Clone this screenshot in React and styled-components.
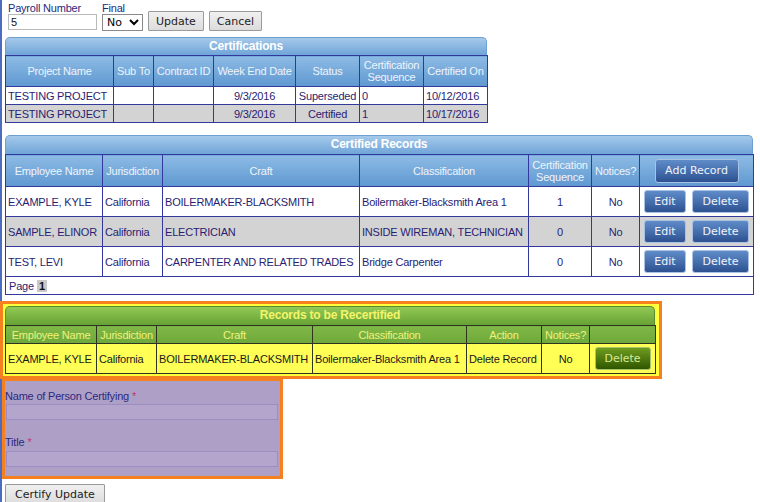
import React from 'react';
import styled, { createGlobalStyle, css } from 'styled-components';

const GlobalStyle = createGlobalStyle`
  body {
    margin: 0;
    background: #fff;
    font-family: "Liberation Sans", Arial, sans-serif;
  }
`;

const tones = {
  blue: {
    titleBg: 'linear-gradient(#a6c9ea, #6fa5d8)',
    titleBorder: '#6e9fd2',
    titleText: '#ffffff',
    headBg: 'linear-gradient(#8dbbe5, #5f98d0)',
    headText: '#eef4fb',
    line: '#33389c',
    text: '#2a1d72',
  },
  green: {
    titleBg: 'linear-gradient(#93c955, #66a234)',
    titleBorder: '#5a8a2b',
    titleText: '#f4f46a',
    headBg: 'linear-gradient(#80b847, #6ea83a)',
    headText: '#eef37c',
    line: '#2f3420',
    text: '#1a1a1a',
  },
};

const Page = styled.div`
  min-height: 502px;
  box-sizing: border-box;
  border-left: 2px solid #4b6cc0;
  padding: 2px 0 0 3px;
`;

const TopForm = styled.div`
  display: flex;
  align-items: flex-end;
  gap: 5px;
  margin-left: 3px;
`;

const Field = styled.label`
  display: flex;
  flex-direction: column;
  font-size: 11px;
  letter-spacing: -0.2px;
  color: #1f2a80;
  line-height: 12px;
`;

const TextInput = styled.input`
  box-sizing: border-box;
  width: ${(p) => p.$width}px;
  height: 16px;
  margin: 0 0 1px;
  padding: 0 2px;
  border: 1px solid #b9b9b9;
  font-family: "Liberation Sans", Arial, sans-serif;
  font-size: 11px;
  color: #111;
`;

const Select = styled.select`
  width: 41px;
  height: 17px;
  margin: 0;
  font-family: "DejaVu Sans", sans-serif;
  font-size: 11px;
  border: 1px solid #8a8a8a;
  background: #fff;
`;

const PlainButton = styled.button`
  height: 20px;
  padding: 0 7px;
  border: 1px solid #9a9a9a;
  border-radius: 1px;
  background: linear-gradient(#f0f0f0, #dcdcdc);
  font-family: "DejaVu Sans", sans-serif;
  font-size: 11px;
  color: #222;
  cursor: pointer;
`;

const Panel = styled.div`
  width: ${(p) => p.$width}px;
  margin-top: ${(p) => p.$top || 0}px;
`;

const PanelTitle = styled.div`
  box-sizing: border-box;
  height: ${(p) => p.$height}px;
  line-height: ${(p) => p.$height - 2}px;
  text-align: center;
  font-size: 12px;
  font-weight: bold;
  letter-spacing: -0.2px;
  color: ${(p) => tones[p.$tone].titleText};
  background: ${(p) => tones[p.$tone].titleBg};
  border: 1px solid ${(p) => tones[p.$tone].titleBorder};
  border-bottom: none;
  border-radius: 5px 5px 0 0;
`;

const Grid = styled.table`
  width: 100%;
  table-layout: fixed;
  border-collapse: collapse;
  font-size: 11px;
  letter-spacing: -0.2px;
  color: ${(p) => tones[p.$tone].text};
  border: 1px solid ${(p) => tones[p.$tone].line};
`;

const HeadCell = styled.th`
  height: ${(p) => p.$height}px;
  padding: 0 2px;
  font-weight: normal;
  line-height: 12px;
  text-align: center;
  white-space: nowrap;
  color: ${(p) => tones[p.$tone].headText};
  background: ${(p) => tones[p.$tone].headBg};
  border: 1px solid ${(p) => tones[p.$tone].line};
`;

const Row = styled.tr`
  height: ${(p) => p.$height}px;
  background: ${(p) => p.$bg || '#fff'};
`;

const Cell = styled.td`
  padding: 0 2px;
  white-space: nowrap;
  overflow: hidden;
  text-align: ${(p) => p.$align || 'left'};
  border: 1px solid ${(p) => tones[p.$tone].line};
`;

const ActionCell = styled.td`
  padding: 0;
  text-align: center;
  white-space: nowrap;
  border: 1px solid ${(p) => tones[p.$tone].line};
`;

const ButtonGroup = styled.div`
  display: flex;
  justify-content: center;
  gap: 6px;
`;

const PanelButton = styled.button`
  box-sizing: border-box;
  height: ${(p) => p.$height || 23}px;
  width: ${(p) => p.$width}px;
  padding: 0;
  border-radius: 3px;
  font-family: "DejaVu Sans", sans-serif;
  font-size: 11px;
  cursor: pointer;
  ${(p) =>
    p.$tone === 'green'
      ? css`
          color: #d8ea96;
          background: linear-gradient(#6f9c1f, #2f5600);
          border: 1px solid #a7c46a;
        `
      : css`
          color: #f0f4fb;
          background: linear-gradient(#5f8cc9, #2d5191);
          border: 1px solid #a9c2e4;
        `}
`;

const PagerRow = styled.td`
  height: 17px;
  padding: 0 3px;
  font-size: 11px;
  color: #2a1d72;
  border: 1px solid #33389c;
`;

const PageNumber = styled.span`
  display: inline-block;
  margin-left: 3px;
  padding: 0 2px;
  background: #c9c9c9;
  font-weight: bold;
  color: #111;
`;

const Highlight = styled.div`
  box-sizing: border-box;
  width: ${(p) => p.$width}px;
  margin-left: ${(p) => p.$left}px;
  margin-top: ${(p) => p.$top}px;
  border: 3px solid #f5801f;
  background: ${(p) => p.$bg};
  padding: ${(p) => p.$pad};
`;

const FormLabel = styled.div`
  font-size: 11px;
  line-height: 13px;
  letter-spacing: -0.2px;
  color: #2b2a7e;
  margin-top: ${(p) => p.$top}px;
`;

const Required = styled.span`
  color: #c2366e;
  margin-left: 3px;
`;

const PurpleInput = styled.input`
  display: block;
  box-sizing: border-box;
  width: 272px;
  height: 16px;
  margin: ${(p) => p.$top}px 0 0 1px;
  border: 1px solid #9c8dc4;
  background: #b4a5cd;
`;

const SubmitButton = styled(PlainButton)`
  margin-top: 5px;
  height: 21px;
  padding: 0 9px;
`;

const certifications = [
  ['TESTING PROJECT', '', '', '9/3/2016', 'Superseded', '0', '10/12/2016'],
  ['TESTING PROJECT', '', '', '9/3/2016', 'Certified', '1', '10/17/2016'],
];

const records = [
  ['EXAMPLE, KYLE', 'California', 'BOILERMAKER-BLACKSMITH', 'Boilermaker-Blacksmith Area 1', '1', 'No'],
  ['SAMPLE, ELINOR', 'California', 'ELECTRICIAN', 'INSIDE WIREMAN, TECHNICIAN', '0', 'No'],
  ['TEST, LEVI', 'California', 'CARPENTER AND RELATED TRADES', 'Bridge Carpenter', '0', 'No'],
];

function Cols({ widths }) {
  return (
    <colgroup>
      {widths.map((w, i) => (
        <col key={i} style={{ width: w }} />
      ))}
    </colgroup>
  );
}

function App() {
  const certAlign = ['left', 'left', 'left', 'center', 'center', 'left', 'left'];

  return (
    <Page>
      <GlobalStyle />
      <TopForm>
        <Field>
          Payroll Number
          <TextInput $width={89} defaultValue="5" />
        </Field>
        <Field>
          Final
          <Select defaultValue="No">
            <option>No</option>
            <option>Yes</option>
          </Select>
        </Field>
        <PlainButton>Update</PlainButton>
        <PlainButton>Cancel</PlainButton>
      </TopForm>

      <Panel $width={482} $top={6}>
        <PanelTitle $tone="blue" $height={18}>Certifications</PanelTitle>
        <Grid $tone="blue">
          <Cols widths={[108, 40, 60, 82, 64, 64, 64]} />
          <thead>
            <tr>
              {['Project Name', 'Sub To', 'Contract ID', 'Week End Date', 'Status'].map((h) => (
                <HeadCell key={h} $tone="blue" $height={30}>{h}</HeadCell>
              ))}
              <HeadCell $tone="blue" $height={30}>Certification<br />Sequence</HeadCell>
              <HeadCell $tone="blue" $height={30}>Certified On</HeadCell>
            </tr>
          </thead>
          <tbody>
            {certifications.map((row, r) => (
              <Row key={r} $height={18} $bg={r % 2 ? '#d3d3d3' : '#fff'}>
                {row.map((v, i) => (
                  <Cell key={i} $tone="blue" $align={certAlign[i]}>{v}</Cell>
                ))}
              </Row>
            ))}
          </tbody>
        </Grid>
      </Panel>

      <Panel $width={748} $top={12}>
        <PanelTitle $tone="blue" $height={19}>Certified Records</PanelTitle>
        <Grid $tone="blue">
          <Cols widths={[97, 60, 197, 169, 63, 48, 114]} />
          <thead>
            <tr>
              {['Employee Name', 'Jurisdiction', 'Craft', 'Classification'].map((h) => (
                <HeadCell key={h} $tone="blue" $height={31}>{h}</HeadCell>
              ))}
              <HeadCell $tone="blue" $height={31}>Certification<br />Sequence</HeadCell>
              <HeadCell $tone="blue" $height={31}>Notices?</HeadCell>
              <HeadCell $tone="blue" $height={31}>
                <PanelButton $tone="blue" $width={84} $height={24}>Add Record</PanelButton>
              </HeadCell>
            </tr>
          </thead>
          <tbody>
            {records.map((row, r) => (
              <Row key={r} $height={30} $bg={r % 2 ? '#d3d3d3' : '#fff'}>
                {row.map((v, i) => (
                  <Cell key={i} $tone="blue" $align={i >= 4 ? 'center' : 'left'}>{v}</Cell>
                ))}
                <ActionCell $tone="blue">
                  <ButtonGroup>
                    <PanelButton $tone="blue" $width={42}>Edit</PanelButton>
                    <PanelButton $tone="blue" $width={57}>Delete</PanelButton>
                  </ButtonGroup>
                </ActionCell>
              </Row>
            ))}
            <tr>
              <PagerRow colSpan={7}>
                Page<PageNumber>1</PageNumber>
              </PagerRow>
            </tr>
          </tbody>
        </Grid>
      </Panel>

      <Highlight $width={662} $left={-5} $top={6} $bg="#ffff3c" $pad="2px 3px 2px 2px">
        <Panel $width={650}>
          <PanelTitle $tone="green" $height={19}>Records to be Recertified</PanelTitle>
          <Grid $tone="green">
            <Cols widths={[91, 60, 156, 154, 75, 48, 66]} />
            <thead>
              <tr>
                {['Employee Name', 'Jurisdiction', 'Craft', 'Classification', 'Action', 'Notices?', ''].map((h, i) => (
                  <HeadCell key={i} $tone="green" $height={17}>{h}</HeadCell>
                ))}
              </tr>
            </thead>
            <tbody>
              <Row $height={30} $bg="#ffff55">
                <Cell $tone="green">EXAMPLE, KYLE</Cell>
                <Cell $tone="green">California</Cell>
                <Cell $tone="green">BOILERMAKER-BLACKSMITH</Cell>
                <Cell $tone="green">Boilermaker-Blacksmith Area 1</Cell>
                <Cell $tone="green">Delete Record</Cell>
                <Cell $tone="green" $align="center">No</Cell>
                <ActionCell $tone="green">
                  <PanelButton $tone="green" $width={56}>Delete</PanelButton>
                </ActionCell>
              </Row>
            </tbody>
          </Grid>
        </Panel>
      </Highlight>

      <Highlight $width={281} $left={-3} $top={-1} $bg="#ae9fc7" $pad="9px 2px 9px 0">
        <FormLabel $top={0}>
          Name of Person Certifying<Required>*</Required>
        </FormLabel>
        <PurpleInput $top={1} />
        <FormLabel $top={16}>
          Title<Required>*</Required>
        </FormLabel>
        <PurpleInput $top={2} />
      </Highlight>

      <SubmitButton>Certify Update</SubmitButton>
    </Page>
  );
}

export default App;
